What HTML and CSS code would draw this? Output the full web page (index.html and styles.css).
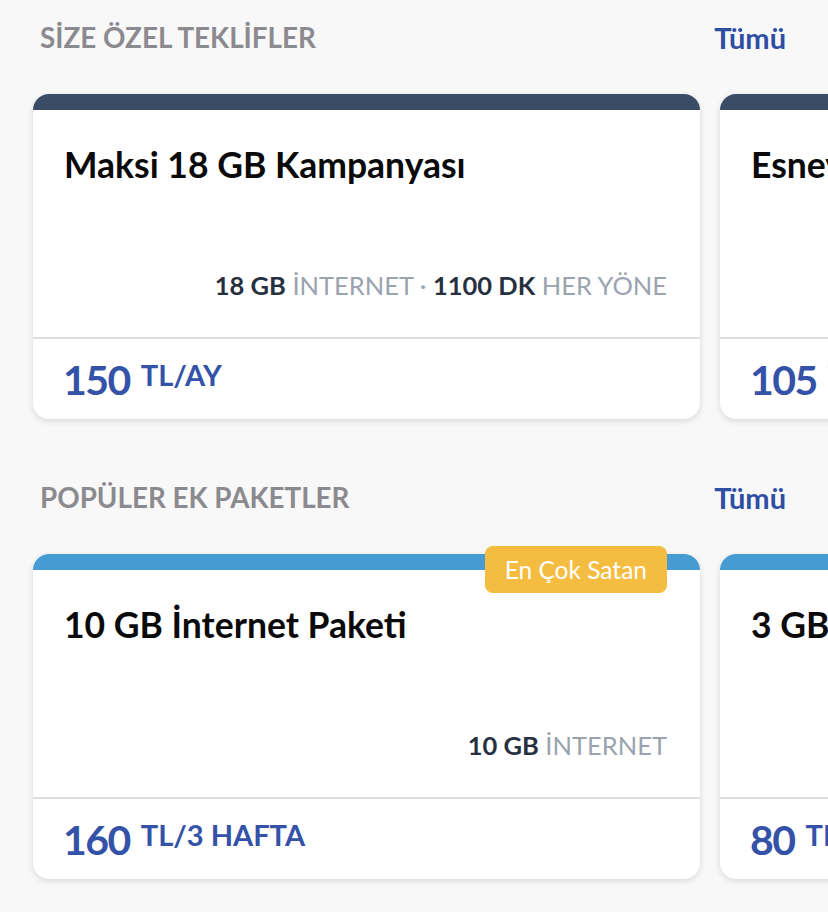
FILE: index.html
```html
<!DOCTYPE html>
<html lang="tr">
<head>
<meta charset="utf-8">
<link rel="stylesheet" href="styles.css">
</head>
<body>
<section class="section">
  <div class="section-head">
    <h2 class="section-title">SİZE ÖZEL TEKLİFLER</h2>
    <a class="see-all">Tümü</a>
  </div>
  <div class="card-row">
    <div class="card card-dark">
      <div class="card-strip"></div>
      <div class="card-body">
        <div class="card-title">Maksi 18 GB Kampanyası</div>
        <div class="card-features"><b>18 GB</b> İNTERNET · <b>1100 DK</b> HER YÖNE</div>
      </div>
      <div class="card-foot"><span class="price">150</span><span class="unit">TL/AY</span></div>
    </div>
    <div class="card card-dark">
      <div class="card-strip"></div>
      <div class="card-body">
        <div class="card-title">Esnevo 10 GB</div>
        <div class="card-features"><b>10 GB</b> İNTERNET</div>
      </div>
      <div class="card-foot"><span class="price">105</span><span class="unit">TL/AY</span></div>
    </div>
  </div>
</section>
<section class="section">
  <div class="section-head">
    <h2 class="section-title">POPÜLER EK PAKETLER</h2>
    <a class="see-all">Tümü</a>
  </div>
  <div class="card-row">
    <div class="card card-light">
      <div class="card-strip"></div>
      <span class="badge">En Çok Satan</span>
      <div class="card-body">
        <div class="card-title">10 GB İnternet Paketi</div>
        <div class="card-features"><b>10 GB</b> İNTERNET</div>
      </div>
      <div class="card-foot"><span class="price">160</span><span class="unit">TL/3 HAFTA</span></div>
    </div>
    <div class="card card-light">
      <div class="card-strip"></div>
      <div class="card-body">
        <div class="card-title">3 GB İnternet Paketi</div>
        <div class="card-features"><b>3 GB</b> İNTERNET</div>
      </div>
      <div class="card-foot"><span class="price">80</span><span class="unit">TL/HAFTA</span></div>
    </div>
  </div>
</section>
</body>
</html>
```
FILE: styles.css
```css
html, body {
  margin: 0;
  padding: 0;
  background: #f8f8f8;
  font-family: "Lato", "Noto Sans", sans-serif;
  width: 828px;
  height: 912px;
  overflow: hidden;
}
.section {
  padding-bottom: 41px;
}
.section-head {
  height: 74px;
  display: flex;
  align-items: center;
  justify-content: space-between;
  padding: 0 42px 0 40px;
}
.section-title {
  margin: 0;
  font-size: 27.8px;
  font-weight: 700;
  color: #8b8b8f;
}
.see-all {
  font-size: 29px;
  font-weight: 700;
  color: #2e4ea3;
}
.card-row {
  margin-top: 20px;
  display: flex;
  gap: 20px;
  padding-left: 33px;
}
.card {
  position: relative;
  flex: 0 0 667px;
  height: 325px;
  background: #fff;
  border-radius: 16px;
  box-shadow: 0 2px 6px rgba(0,0,0,0.13);
  display: flex;
  flex-direction: column;
}
.card-strip {
  height: 16px;
  border-radius: 16px 16px 0 0;
}
.card-dark .card-strip { background: #3a4c66; }
.card-light .card-strip { background: #479bd3; }
.card-body {
  height: 229px;
  box-sizing: border-box;
  padding: 34px 33px 37px 31px;
  display: flex;
  flex-direction: column;
  justify-content: space-between;
  border-bottom: 2px solid #dedede;
}
.card-title {
  font-size: 35.5px;
  line-height: 42px;
  font-weight: 700;
  color: #0a0a0a;
  white-space: nowrap;
}
.card-features {
  text-align: right;
  font-size: 25.5px;
  line-height: 30px;
  color: #9aa3af;
  white-space: nowrap;
}
.card-features b {
  color: #27303f;
  font-weight: 700;
}
.card-foot {
  flex: 1;
  display: flex;
  align-items: center;
  padding-left: 30px;
  color: #3352a8;
  font-weight: 700;
}
.price {
  font-size: 41px;
  line-height: 1;
  letter-spacing: -1.5px;
  margin-right: 11px;
}
.unit {
  font-size: 29px;
  line-height: 1;
  margin-top: -10px;
}
.badge {
  position: absolute;
  top: -8px;
  right: 33px;
  height: 47px;
  padding: 0 20px;
  display: flex;
  align-items: center;
  background: #f4bd42;
  color: #fff;
  border-radius: 8px;
  font-size: 24.5px;
}
```
